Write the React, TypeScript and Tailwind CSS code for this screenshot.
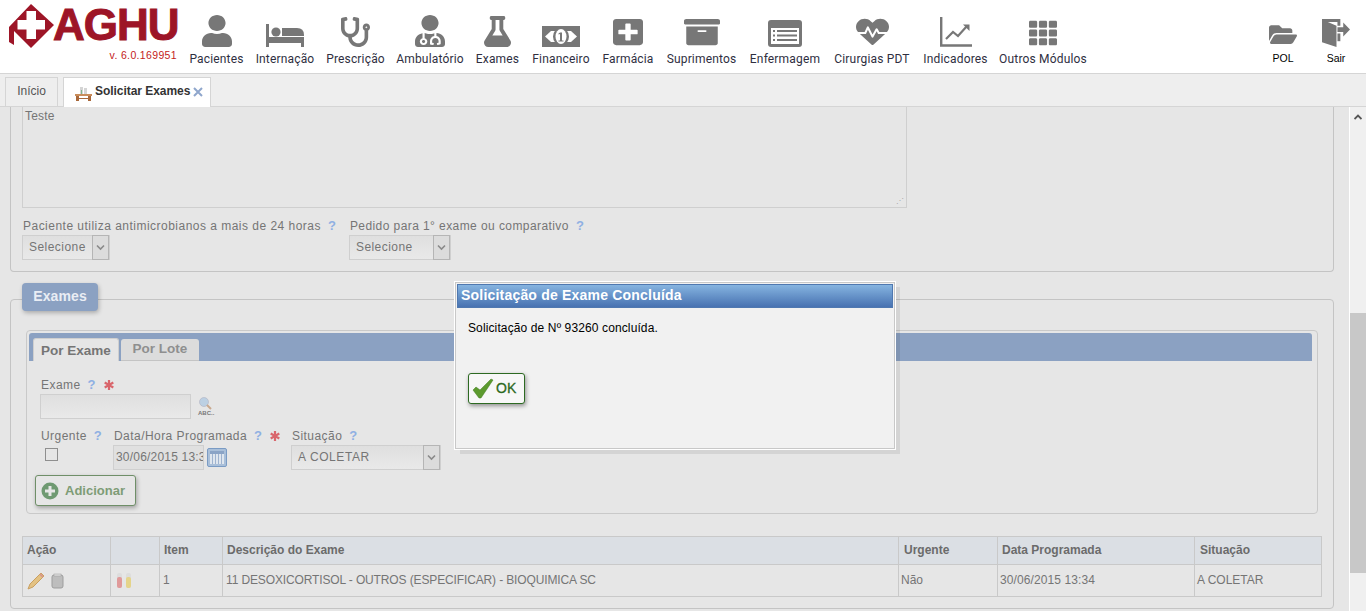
import React from "react";
import { FaUser, FaStethoscope, FaUserMd, FaFlask, FaPlusSquare, FaArchive, FaHeartbeat, FaTh, FaFolderOpen } from "react-icons/fa";

const Bed = (p: any) => (
  <svg viewBox="0 0 38 23" {...p} fill="#777">
    <path d="M0 0h3v13h35v10h-3v-4H3v4H0z" />
    <circle cx="10" cy="8" r="4.600" />
    <path d="M16 4h15q7 0 7 7v1H16z" />
  </svg>
);
const Money = (p: any) => (
  <svg viewBox="0 0 38 21" {...p}>
    <rect width="38" height="21" fill="#777" />
    <path d="M3 10.500L9 5h20l6 5.500L29 16H9z" fill="#fff" />
    <ellipse cx="19" cy="10.500" rx="8" ry="9" fill="#777" />
    <ellipse cx="19" cy="10.500" rx="5.500" ry="7.500" fill="#fff" />
    <path d="M18 6.500h2v8h1.500v1h-5v-1H18V8l-1.500.5v-1z" fill="#777" />
  </svg>
);
const ListAlt = (p: any) => (
  <svg viewBox="0 0 34 27" {...p}>
    <rect width="34" height="27" rx="3" fill="#777" />
    <rect x="3" y="8" width="28" height="16" fill="#fff" />
    <path d="M5 10h2v2H5zM9 10h20v2H9zM5 14.500h2v2H5zM9 14.500h20v2H9zM5 19h2v2H5zM9 19h20v2H9z" fill="#777" />
  </svg>
);
const ChartL = (p: any) => (
  <svg viewBox="0 0 32 30" {...p} fill="none" stroke="#777">
    <path d="M1.200 0v28.500H32" strokeWidth="2.400" />
    <path d="M6 22l7-7 5 4 9-10" strokeWidth="2.200" />
    <path d="M23 7.500h6.500v6.500z" fill="#777" stroke="none" />
  </svg>
);
const Door = (p: any) => (
  <svg viewBox="0 0 29 29" {...p} fill="#777">
    <path d="M0 0h19v7h-3V3H6l9 4v22L0 24z" />
    <path d="M16 15h3v8h-3z" />
    <path d="M16 8.500h6V3.500l7 7.500-7 7v-4.500h-6z" />
  </svg>
);
const Star = () => (
  <svg viewBox="0 0 10 10" className="ml-[8px] inline-block h-[10px] w-[10px] align-[-1px]" stroke="#d9666c" strokeWidth="2.200">
    <path d="M5 0v10M.7 2.500l8.600 5M.7 7.500l8.600-5" />
  </svg>
);
const Help = () => <span className="ml-[7px] text-[13px] font-bold tracking-normal text-[#8fb0e3]">?</span>;

const nav: [string, React.ComponentType<any>, number, number, number][] = [
  ["Pacientes", FaUser, 55, 30, 32],
  ["Internação", Bed, 58, 38, 23],
  ["Prescrição", FaStethoscope, 59, 29, 30],
  ["Ambulatório", FaUserMd, 66, 30, 32],
  ["Exames", FaFlask, 45, 27, 31],
  ["Financeiro", Money, 58, 38, 21],
  ["Farmácia", FaPlusSquare, 52, 30, 30],
  ["Suprimentos", FaArchive, 71, 36, 30],
  ["Enfermagem", ListAlt, 72, 34, 27],
  ["Cirurgias PDT", FaHeartbeat, 78, 33, 30],
  ["Indicadores", ChartL, 65, 32, 30],
  ["Outros Módulos", FaTh, 86, 28, 28],
];

function Select({ label, w, wide }: { label: string; w: number; wide?: boolean }) {
  return (
    <div className="flex h-[25px] border border-[#cfcfcf] bg-gradient-to-b from-[#dfdfdf] to-[#e9e9e9]" style={{ width: w }}>
      <span className={wide ? "flex-1 pl-[6px] text-[12px] leading-[23px] tracking-[0.6px] text-[#757575]" : "flex-1 pl-[6px] text-[12px] leading-[23px] tracking-[0.45px] text-[#757575]"}>{label}</span>
      <span className="-my-px flex w-[17px] items-center justify-center border border-[#b5b5b5] bg-[#dcdcdc]">
        <svg width="9" height="7" viewBox="0 0 9 7"><path d="M1 1.500l3.500 3.500L8 1.500" fill="none" stroke="#8a8a8a" strokeWidth="1.600" /></svg>
      </span>
    </div>
  );
}

export default function App() {
  return (
    <div className="relative h-[611px] w-[1366px] overflow-hidden bg-white font-['Liberation_Sans',Arial,sans-serif]">
      <header className="flex h-[73px] bg-white">
        <div className="w-[189px] shrink-0 pl-[8px] pt-[3px]">
          <div className="flex items-center">
            <svg width="46" height="46" viewBox="0 0 46 46" className="shrink-0">
              <path d="M23 1L46 22 23 45 6 28v14l-5-3V24z" fill="#9d1527" />
              <path d="M18.500 8h9.500v9h9v9.500h-9V36h-9.500v-9.500H9.500V17h9z" fill="#fff" />
            </svg>
            <span className="-ml-[1px] -mt-[2px] text-[44px] font-bold leading-[40px] tracking-[-1px] text-[#9d1527] [-webkit-text-stroke:1px_#9d1527]">AGHU</span>
          </div>
          <div className="mt-[1px] pr-[12px] text-right text-[10.500px] leading-[10px] tracking-[0.35px] text-[#c41a1a]">v. 6.0.169951</div>
        </div>
        <nav className="flex gap-3">
          {nav.map(([label, Icon, w, iw, ih]) => (
            <div key={label} className="flex flex-col items-center" style={{ width: w }}>
              <div className="flex h-[47px] items-end justify-center text-[#777]">
                <Icon style={{ width: iw, height: ih }} preserveAspectRatio="none" />
              </div>
              <span className="mt-[5px] whitespace-nowrap font-['Roboto',sans-serif] text-[12px] leading-[14px] tracking-[0.17px] text-[#2f2f3f]">{label}</span>
            </div>
          ))}
        </nav>
        <div className="ml-auto flex gap-[23px] pr-[15px]">
          <div className="flex w-[30px] flex-col items-center">
            <div className="flex h-[47px] items-end text-[#777]"><FaFolderOpen style={{ width: 28, height: 25 }} preserveAspectRatio="none" /></div>
            <span className="mt-[4px] text-[10.500px] leading-[14px] text-black">POL</span>
          </div>
          <div className="flex w-[30px] flex-col items-center">
            <div className="flex h-[47px] items-end"><Door style={{ width: 28, height: 28 }} /></div>
            <span className="mt-[4px] text-[10.500px] leading-[14px] text-black">Sair</span>
          </div>
        </div>
      </header>

      <div className="flex h-[34px] items-end gap-[5px] border-y border-[#d5d5d5] bg-[#eeeeee] pl-[5px]">
        <div className="h-[29px] w-[53px] border border-b-0 border-[#d5d5d5] text-center text-[12px] leading-[26px] text-[#555]">Início</div>
        <div className="-mb-px flex h-[30px] w-[148px] items-center border border-b-0 border-[#d5d5d5] bg-white pb-[3px] pl-[11px] text-[12px] font-bold text-[#333]">
          <svg width="17" height="14" viewBox="0 0 17 14" className="mr-[3px] mt-[5px]"><path d="M5 0h3v7H5zM9 1h3v6H9z" fill="#d5d5d5" /><path d="M6 3h1v4H6z" fill="#7fb58a" /><path d="M0 7h17v2H0z" fill="#c98d5b" /><path d="M1 9h3v5H1zM13 9h3v5h-3zM4 11h9v1H4z" fill="#a9683a" /></svg>
          <span className="whitespace-nowrap tracking-[-0.05px]">Solicitar Exames</span>
          <svg width="10" height="10" viewBox="0 0 10 10" className="ml-[3px] mt-[1px]"><path d="M1 1l8 8M9 1l-8 8" stroke="#8fa6cc" strokeWidth="2" /></svg>
        </div>
      </div>

      <div className="flex h-[504px]">
        <main className="w-[1349px] overflow-hidden bg-[#e6e6e6] text-[12px] text-[#757575]">
          <section className="-mt-[10px] ml-[10px] mr-[15px] h-[175px] rounded-b-[4px] border border-t-0 border-[#c4c4c4] pl-[11px]">
            <div className="relative h-[111px] w-[885px] border border-t-0 border-[#cfcfcf] px-[2px] pt-[10px] tracking-[0.2px]">
              Teste
              <span className="absolute bottom-[2px] right-[2px] text-[8px] leading-[8px] text-[#aaa]">⋰</span>
            </div>
            <div className="mt-[11px] flex gap-[14px] pl-[1px]">
              <div>
                <div className="h-[16px] whitespace-nowrap leading-[14px] tracking-[0.48px]">Paciente utiliza antimicrobianos a mais de 24 horas<Help /></div>
                <div className="-ml-[1px]"><Select label="Selecione" w={88} /></div>
              </div>
              <div>
                <div className="h-[16px] whitespace-nowrap leading-[14px] tracking-[0.42px]">Pedido para 1° exame ou comparativo<Help /></div>
                <div className="-ml-[1px]"><Select label="Selecione" w={102} /></div>
              </div>
            </div>
          </section>

          <section className="relative mt-[27px] ml-[10px] mr-[15px] h-[310px] rounded-[4px] border border-[#c4c4c4] px-[11px] pt-[30px]">
            <div className="absolute -top-[17px] left-[11px] h-[28px] w-[76px] rounded-[4px] bg-[#8ba1c2] text-center text-[14px] font-bold leading-[26px] tracking-[0.1px] text-[#e9edf4] shadow-[1px_2px_4px_rgba(0,0,0,0.25)]">Exames</div>
            <div className="ml-[4px] mr-[4px] h-[184px] rounded-[4px] border border-[#c9c9c9] pl-[2px] pr-[5px] pt-[2px]">
              <div className="flex h-[28px] items-end gap-[2px] rounded-t-[3px] bg-[#8ba1c2] pl-[4px]">
                <div className="h-[23px] w-[86px] rounded-t-[3px] border border-b-0 border-[#cfcfcf] bg-[#e6e6e6] text-center text-[13.500px] font-bold leading-[24px] text-[#757575]">Por Exame</div>
                <div className="h-[22px] w-[78px] rounded-t-[3px] border-b border-[#c4c4c4] bg-[#dcdcdc] text-center text-[13.500px] font-bold leading-[19px] text-[#8f8f8f]">Por Lote</div>
              </div>
              <div className="pl-[11px] pt-[17px] tracking-[0.45px]">
                <div className="h-[16px] pl-[1px] leading-[14px]">Exame<Help /><Star /></div>
                <div className="flex items-center gap-[7px]">
                  <div className="h-[25px] w-[151px] border border-[#cfcfcf] bg-gradient-to-b from-[#dfdfdf] to-[#e9e9e9]" />
                  <div className="flex flex-col items-start">
                    <svg width="16" height="13" viewBox="0 0 16 13"><circle cx="6" cy="5" r="4.500" fill="#bcd0e3" stroke="#aab" strokeWidth=".5" /><path d="M9 8l4 4" stroke="#c9a98f" strokeWidth="2" /></svg>
                    <span className="text-[6px] font-bold leading-[6px] tracking-normal text-[#777]">ABC..</span>
                  </div>
                </div>
                <div className="mt-[10px] flex">
                  <div className="w-[74px] pl-[1px]">
                    <div className="h-[16px] leading-[14px]">Urgente<Help /></div>
                    <div className="ml-[4px] mt-[3px] h-[13px] w-[13px] border border-[#8f8f8f] bg-[#e6e6e6]" />
                  </div>
                  <div className="w-[178px]">
                    <div className="h-[16px] whitespace-nowrap leading-[14px]">Data/Hora Programada<Help /><Star /></div>
                    <div className="-ml-[1px] flex items-center gap-[3px]">
                      <div className="h-[25px] w-[91px] overflow-hidden whitespace-nowrap border border-[#cfcfcf] bg-[#e0e0e0] pl-[2px] leading-[23px] tracking-[0.2px]">30/06/2015 13:3</div>
                      <div className="flex h-[19px] w-[20px] flex-col rounded-[2px] border border-[#7a9bc4] bg-[#a9bfd9] p-[2px]">
                        <div className="h-[3px] bg-[#8ba4c6]" />
                        <div className="flex-1 bg-[repeating-linear-gradient(90deg,#dfe6ee_0,#dfe6ee_2px,#9fb3cf_2px,#9fb3cf_3px)]" />
                      </div>
                    </div>
                  </div>
                  <div>
                    <div className="h-[16px] leading-[14px]">Situação<Help /></div>
                    <div className="-ml-[1px]"><Select label="A COLETAR" w={150} wide /></div>
                  </div>
                </div>
                <button className="-ml-[5px] mt-[5px] flex h-[31px] w-[101px] items-center rounded-[3px] border border-[#6f8f68] bg-[#e6e6e6] pl-[5px] text-[13px] font-bold tracking-normal text-[#7e9c76] shadow-[1px_2px_4px_rgba(0,0,0,0.3)]">
                  <svg width="18" height="18" viewBox="0 0 18 18"><circle cx="9" cy="9" r="8.500" fill="#6f9a72" /><path d="M7.500 4h3v3.500H14v3h-3.500V14h-3v-3.500H4v-3h3.500z" fill="#e6e6e6" /></svg>
                  <span className="ml-[6px]">Adicionar</span>
                </button>
              </div>
            </div>

            <table className="mt-[22px] w-[1299px] table-fixed border-collapse border border-[#c9c9c9]">
              <colgroup>
                <col className="w-[88px]" /><col className="w-[49px]" /><col className="w-[63px]" /><col className="w-[676px]" /><col className="w-[99px]" /><col className="w-[197px]" /><col className="w-[127px]" />
              </colgroup>
              <thead>
                <tr className="h-[28px] bg-[#dbdfe4] text-left font-bold text-[#6b6b6b]">
                  {["Ação", "", "Item", "Descrição do Exame", "Urgente", "Data Programada", "Situação"].map((h, i) => (
                    <th key={i} className={i === 4 || i === 6 ? "border border-[#c9c9c9] px-[5px] py-0 pb-[2px] font-bold" : "border border-[#c9c9c9] px-[4px] py-0 pb-[2px] font-bold"}>{h}</th>
                  ))}
                </tr>
              </thead>
              <tbody>
                <tr className="h-[32px]">
                  <td className="border border-[#c9c9c9] px-[4px]">
                    <div className="flex items-center gap-[6px]">
                      <svg width="18" height="18" viewBox="0 0 18 18"><path d="M14 1l3 3L6 15l-5 2 2-5z" fill="#e3c283" stroke="#c99f60" /><path d="M13 2l3 3" stroke="#d99a8a" strokeWidth="2" /></svg>
                      <svg width="13" height="16" viewBox="0 0 13 16"><rect x="1" y="2" width="11" height="13" rx="2" fill="#bdbdbd" stroke="#9d9d9d" /><rect x="3" y="1" width="7" height="2" fill="#ddd" stroke="#9d9d9d" strokeWidth=".5" /></svg>
                    </div>
                  </td>
                  <td className="border border-[#c9c9c9] px-[4px]">
                    <svg width="16" height="17" viewBox="0 0 16 17" className="ml-[1px]"><rect x="1" y="1" width="5" height="15" rx="2" fill="#ddd" /><rect x="1" y="5" width="5" height="11" rx="2" fill="#e09a9a" /><rect x="10" y="1" width="5" height="15" rx="2" fill="#ddd" /><rect x="10" y="5" width="5" height="11" rx="2" fill="#e5d48a" /></svg>
                  </td>
                  <td className="border border-[#c9c9c9] px-[3px] pb-[1px]">1</td>
                  <td className="whitespace-nowrap border border-[#c9c9c9] px-[3px] pb-[1px] tracking-[-0.13px]">11 DESOXICORTISOL - OUTROS (ESPECIFICAR) - BIOQUIMICA SC</td>
                  <td className="border border-[#c9c9c9] px-[2px] pb-[1px]">Não</td>
                  <td className="border border-[#c9c9c9] px-[2px] pb-[1px] tracking-[0.1px]">30/06/2015 13:34</td>
                  <td className="border border-[#c9c9c9] px-[2px] pb-[1px]">A COLETAR</td>
                </tr>
              </tbody>
            </table>
          </section>
        </main>
        <aside className="relative w-[17px] border-l border-white bg-[#f0f0f0] pt-[206px]">
          <svg width="8" height="6" viewBox="0 0 8 6" className="absolute left-[4px] top-[7px]"><path d="M.5 5L4 1.500 7.500 5" fill="none" stroke="#555" strokeWidth="1.800" /></svg>
          <div className="h-[260px] bg-[#c8c8c8]" />
        </aside>
      </div>

      <div className="absolute left-[455px] top-[282px] h-[167px] w-[440px] border border-[#c8c8c8] bg-[#f1f1f1] p-px shadow-[5px_5px_0_rgba(0,0,0,0.08)] outline outline-1 outline-white">
        <div className="h-[24px] border border-[#4f78b0] bg-gradient-to-b from-[#86b4e0] to-[#4872b1] pl-[3px] text-[14px] font-bold leading-[21px] tracking-[0.2px] text-white">Solicitação de Exame Concluída</div>
        <div className="pl-[11px] pt-[13px] text-[12px] leading-[14px] tracking-[0.12px] text-black">Solicitação de Nº 93260 concluída.</div>
        <button className="ml-[11px] mt-[38px] flex h-[31px] w-[57px] items-center rounded-[3px] border border-[#2d6a22] bg-[#f7f7f7] pl-[3px] text-[14px] font-bold text-[#2d6a22] shadow-[1px_2px_4px_rgba(0,0,0,0.4)]">
          <svg width="22" height="21" viewBox="0 0 22 21"><path d="M1 12l3-3 4 3L19 1l2 1L9 20h-2z" fill="#5c9a2e" stroke="#3f7a1f" strokeWidth=".5" /></svg>
          <span className="ml-[2px] font-normal [-webkit-text-stroke:0.3px_#2d6a22]">OK</span>
        </button>
      </div>
    </div>
  );
}
